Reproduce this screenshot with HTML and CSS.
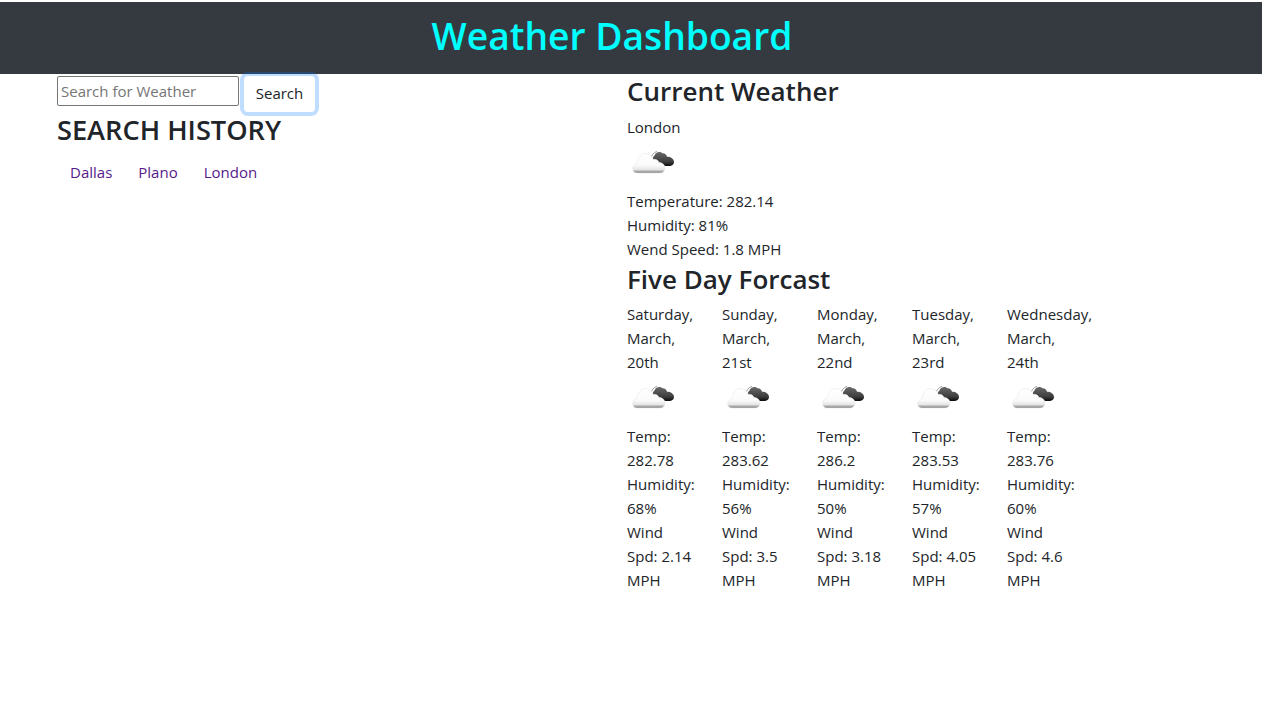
FILE: index.html
```html
<!DOCTYPE html>
<html lang="en">
<head>
<meta charset="UTF-8">
<meta name="viewport" content="width=device-width, initial-scale=1.0">
<title>Weather Dashboard</title>
<link rel="stylesheet" href="styles.css">
</head>
<body>

<svg class="defs" width="0" height="0">
  <defs>
    <linearGradient id="white-cloud" x1="0" y1="0" x2="0" y2="1">
      <stop offset="0" stop-color="#ffffff"/>
      <stop offset="0.6" stop-color="#fbfbfb"/>
      <stop offset="0.82" stop-color="#e6e6e6"/>
      <stop offset="0.92" stop-color="#a8a8a8"/>
      <stop offset="1" stop-color="#7a7a7a"/>
    </linearGradient>
    <linearGradient id="dark-cloud" x1="0" y1="0" x2="0" y2="1">
      <stop offset="0" stop-color="#6a6a6a"/>
      <stop offset="0.7" stop-color="#3c3c3c"/>
      <stop offset="1" stop-color="#0a0a0a"/>
    </linearGradient>
    <symbol id="cloud-icon" viewBox="0 0 50 50">
      <path d="M23.7 20 C24.5 16 26.5 13.500 30 12.400" fill="none" stroke="#a0a0a0" stroke-width="1"/>
      <path d="M27.5 25 C25.5 22 25 18.500 27.500 16.500 C28.500 13 33 11.800 35.500 14.300 C37.500 14 39.500 15.500 40 17.800 C43 17.500 47 19.500 47 23 C47 25.800 44.500 27 42 27 L33 27 C31 27 29 26.500 27.500 25 Z" fill="url(#dark-cloud)"/>
      <path d="M10 34 C7 34 5.700 32 5.700 29.500 C5.700 27 7.200 25 10 24.600 C10.500 18.500 14.500 14.500 18 14.500 C22 14.500 25 17 26 20.500 C28.500 19.800 31 21 32 23.500 C35.500 23.500 38 26 38 29 C38 32 36 34 33 34 Z" fill="url(#white-cloud)" stroke="#e8e8e8" stroke-width="0.6"/>
    </symbol>
  </defs>
</svg>

<header class="site-header">
  <h1>Weather Dashboard</h1>
</header>

<main class="page">
  <section class="col-search">
    <form class="search-form">
      <input type="text" class="search-input" placeholder="Search for Weather">
      <button type="button" class="search-btn">Search</button>
    </form>
    <h2>SEARCH HISTORY</h2>
    <ul class="history">
      <li><a href="#">Dallas</a></li>
      <li><a href="#">Plano</a></li>
      <li><a href="#">London</a></li>
    </ul>
  </section>

  <section class="col-weather">
    <h3>Current Weather</h3>
    <p>London</p>
    <svg class="icon"><use href="#cloud-icon"/></svg>
    <p>Temperature: 282.14</p>
    <p>Humidity: 81%</p>
    <p>Wend Speed: 1.8 MPH</p>

    <h3 class="forecast-title">Five Day Forcast</h3>
    <div class="forecast">
      <div class="day">
        <p>Saturday, March, 20th</p>
        <svg class="icon"><use href="#cloud-icon"/></svg>
        <p>Temp: 282.78</p>
        <p>Humidity: 68%</p>
        <p>Wind Spd: 2.14 MPH</p>
      </div>
      <div class="day">
        <p>Sunday, March, 21st</p>
        <svg class="icon"><use href="#cloud-icon"/></svg>
        <p>Temp: 283.62</p>
        <p>Humidity: 56%</p>
        <p>Wind Spd: 3.5 MPH</p>
      </div>
      <div class="day">
        <p>Monday, March, 22nd</p>
        <svg class="icon"><use href="#cloud-icon"/></svg>
        <p>Temp: 286.2</p>
        <p>Humidity: 50%</p>
        <p>Wind Spd: 3.18 MPH</p>
      </div>
      <div class="day">
        <p>Tuesday, March, 23rd</p>
        <svg class="icon"><use href="#cloud-icon"/></svg>
        <p>Temp: 283.53</p>
        <p>Humidity: 57%</p>
        <p>Wind Spd: 4.05 MPH</p>
      </div>
      <div class="day">
        <p>Wednesday, March, 24th</p>
        <svg class="icon"><use href="#cloud-icon"/></svg>
        <p>Temp: 283.76</p>
        <p>Humidity: 60%</p>
        <p>Wind Spd: 4.6 MPH</p>
      </div>
    </div>
  </section>
</main>

</body>
</html>
```

FILE: styles.css
```css
* {
  box-sizing: border-box;
  padding: 0;
  margin: 0;
}

body {
  padding-top: 2px;
  background-color: #fff;
  color: #212529;
  font-family: "Open Sans", sans-serif;
  font-size: 15px;
  line-height: 24px;
}

.defs {
  position: absolute;
}

.site-header {
  height: 72px;
  padding-right: 38px;
  background-color: #343a40;
  text-align: center;
}

.site-header h1 {
  color: #0ff;
  font-size: 37.2px;
  font-weight: 600;
  line-height: 68px;
}

.page {
  display: flex;
  padding-left: 42px;
}

.col-search {
  width: 570px;
  padding: 0 15px;
}

.col-weather {
  width: 570px;
  padding: 0 15px;
}

.search-form {
  display: flex;
  align-items: flex-start;
  height: 37px;
}

.search-input {
  width: 182px;
  height: 30px;
  margin-top: 2px;
  padding: 1px 3px;
  border: 1px solid #767676;
  border-radius: 2px;
  font-family: inherit;
  font-size: 15px;
}

.search-input::placeholder {
  color: #757575;
}

.search-btn {
  position: relative;
  width: 71px;
  height: 36px;
  margin: 2px 0 0 5px;
  padding-bottom: 2px;
  border: 1px solid transparent;
  border-radius: 4px;
  background: #fff;
  color: #212529;
  font-family: inherit;
  font-size: 15px;
  box-shadow: 0 0 0 4px rgba(0, 123, 255, 0.25);
}

h2 {
  font-size: 27.2px;
  font-weight: 600;
  line-height: 38.4px;
  margin-bottom: 8px;
}

h3 {
  font-size: 26px;
  font-weight: 600;
  line-height: 35.6px;
  margin-bottom: 5px;
}

.forecast-title {
  margin-top: 1px;
}

.history {
  display: flex;
  list-style: none;
  padding-top: 3px;
}

.history a {
  display: block;
  padding: 0 13px;
  color: #551a8b;
  text-decoration: none;
}

.icon {
  display: block;
  width: 50px;
  height: 50px;
}

.forecast {
  display: flex;
}

.day {
  width: 95px;
  padding-right: 30px;
}
```
